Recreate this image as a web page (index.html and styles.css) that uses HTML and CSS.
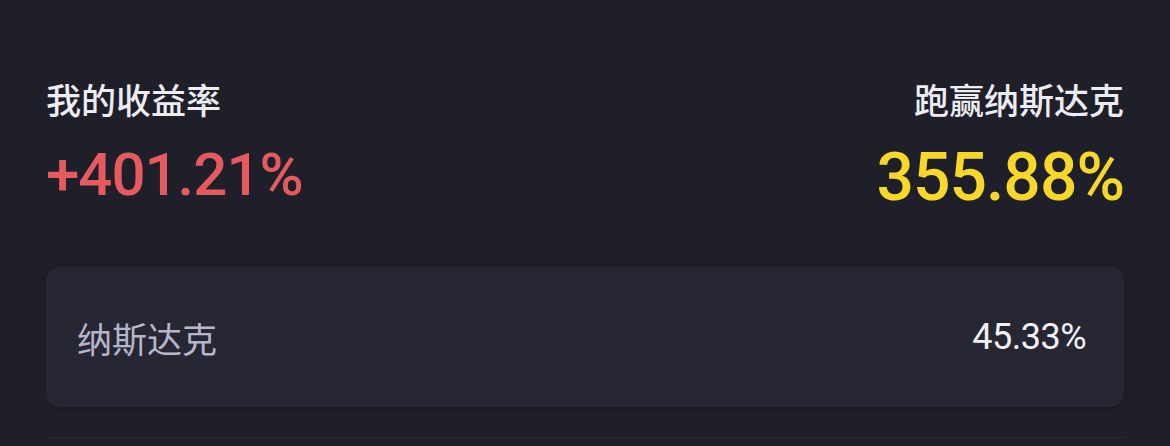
FILE: index.html
```html
<!DOCTYPE html>
<html lang="zh-CN">
<head>
  <meta charset="UTF-8">
  <meta name="viewport" content="width=device-width, initial-scale=1.0">
  <title>收益率</title>
  <link rel="stylesheet" href="styles.css">
</head>
<body>

  <!-- 收益对比 -->
  <div class="summary">
    <div class="stat">
      <div class="stat-label">我的收益率</div>
      <div class="stat-value up">+401.21%</div>
    </div>
    <div class="stat stat-right">
      <div class="stat-label">跑赢纳斯达克</div>
      <div class="stat-value gold">355.88%</div>
    </div>
  </div>

  <!-- 指数卡片 -->
  <div class="index-card">
    <span class="index-name">纳斯达克</span>
    <span class="index-value">45.33%</span>
  </div>

  <div class="divider"></div>

</body>
</html>
```

FILE: styles.css
```css
body {
  margin: 0;
  padding: 0 46px;
  background: #1f1f29;
  font-family: Roboto, 'Noto Sans CJK SC', sans-serif;
  height: 446px;
  overflow: hidden;
}

.summary {
  display: flex;
  justify-content: space-between;
  padding-top: 81px;
}

.stat-right {
  text-align: right;
}

.stat-label {
  color: #ececf2;
  font-size: 35px;
  line-height: 44px;
  font-weight: 500;
}

.stat-value {
  font-size: 60px;
  line-height: 70px;
  margin-top: 15px;
  font-weight: 500;
  letter-spacing: -1px;
}

.up {
  color: #e55a5f;
}

.gold {
  color: #f7d82a;
  font-size: 66px;
  margin-top: 18px;
}

.index-card {
  margin-top: 54px;
  height: 140px;
  border-radius: 14px;
  background: #272733;
  display: flex;
  align-items: center;
  justify-content: space-between;
  padding: 0 38px 0 31px;
  box-shadow: 0 2px 4px rgba(0, 0, 0, 0.15);
}

.index-name {
  color: #b7b5c9;
  font-size: 35px;
}

.index-value {
  color: #f0f0f5;
  font-size: 36px;
  letter-spacing: -0.5px;
}

.divider {
  margin-top: 30px;
  height: 1px;
  background: #2a2a36;
}
```
